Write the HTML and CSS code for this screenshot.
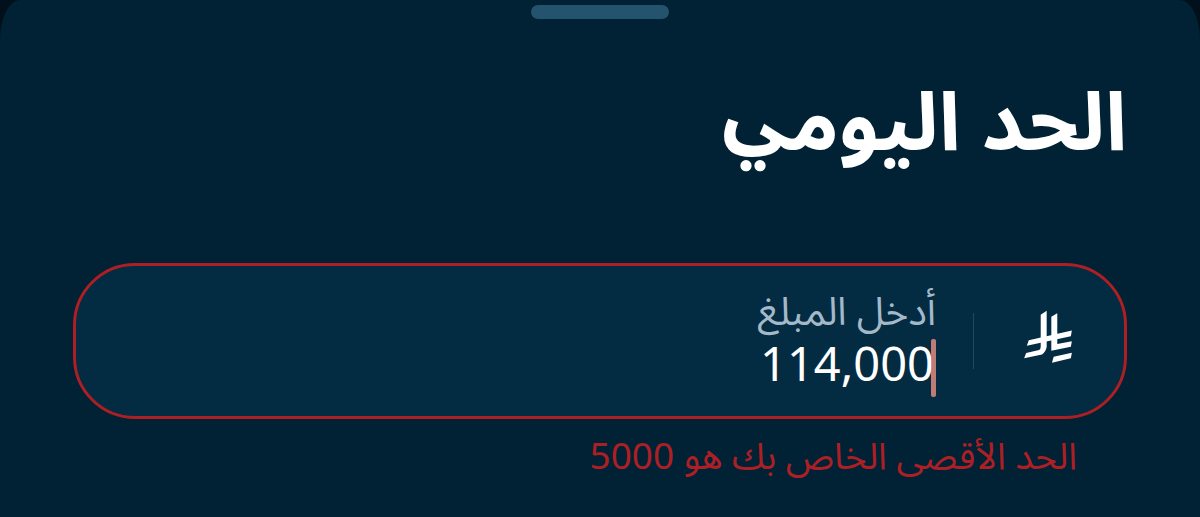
FILE: index.html
```
<!doctype html>
<html lang="ar" dir="rtl">
<head>
    <meta charset="utf-8">
    <title>الحد اليومي</title>
    <link rel="stylesheet" href="styles.css">
</head>
<body>

<main class="sheet">
    <div class="handle"></div>
    <h1 class="title">الحد اليومي</h1>

    <form class="limit-form">
        <div class="field">
            <svg class="currency" viewBox="43 28 144 160" aria-hidden="true">
                <g fill="#fff">
                    <path d="M93 42L111 30V140Q108 156 97 162L43 174L49 158L88 149Q93 147 93 138Z"/>
                    <path d="M125 48L143 38V131L187 122L184 139L125 151Z"/>
                    <path d="M57 119L187 90L184 107L51 136Z"/>
                    <path d="M132 169L187 157L184 174L127 187Z"/>
                </g>
            </svg>
            <div class="divider"></div>
            <div class="entry">
                <label class="label" for="amount">أدخل المبلغ</label>
                <div class="value">
                    <input class="amount" id="amount" type="text" inputmode="numeric" dir="ltr" value="114,000" aria-describedby="amount-error" aria-invalid="true">
                    <span class="caret"></span>
                </div>
            </div>
        </div>
        <p class="error" id="amount-error">الحد الأقصى الخاص بك هو 5000</p>
    </form>
</main>

</body>
</html>
```
FILE: styles.css
```
* { box-sizing: border-box; }
body {
    margin: 0;
    background: #02101c;
    font-family: "Noto Sans", "Noto Sans Arabic UI", "Noto Sans Arabic", "DejaVu Sans", sans-serif;
}
.sheet {
    min-height: 100vh;
    padding: 5px 73px 24px;
    border-radius: 20px 20px 0 0 / 40px 40px 0 0;
    background: #002234;
    color: #fff;
}
.handle {
    width: 138px; height: 14px;
    margin: 0 auto;
    border-radius: 7px;
    background: #24536e;
}
.title {
    margin: 42px 0 86px;
    font-size: 81px;
    line-height: 116px;
}
.field {
    display: flex;
    align-items: center;
    height: 156px;
    padding: 0 52px;
    border: 3px solid #ac1f24;
    border-radius: 62px;
    background: #032b41;
}
.currency {
    width: 48px; height: 53px;
    margin-bottom: 10px;
}
.divider {
    width: 1px; height: 56px;
    margin: 0 50px 0 37px;
    background: #21475d;
}
.entry {
    flex: 1;
    padding-bottom: 8px;
}
.label {
    display: block;
    color: #a3b9c9;
    font-size: 39px;
    line-height: 53px;
}
.value { display: flex; position: relative; }
.amount {
    width: 100%;
    padding: 0 2px;
    border: 0;
    outline: 0;
    background: none;
    color: #fff;
    font: 47px/55px "Noto Sans", sans-serif;
    text-align: right;
}
.caret {
    position: absolute;
    right: 0; top: 3px;
    width: 5px; height: 58px;
    border-radius: 2px;
    background: rgba(222, 139, 128, 0.85);
}
.error {
    margin: 11px 50px 0;
    color: #ac1f24;
    font-size: 37px;
    line-height: 50px;
}
```
